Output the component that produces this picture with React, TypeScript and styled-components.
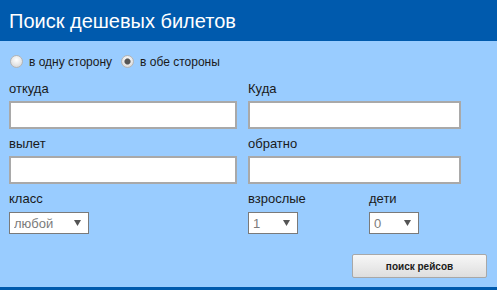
import React, { FC } from 'react';
import styled, { createGlobalStyle } from 'styled-components';

const GlobalStyle = createGlobalStyle`
  html, body {
    margin: 0;
    padding: 0;
    background: #ffffff;
  }
  body {
    font-family: 'Liberation Sans', Arial, sans-serif;
  }
`;

const COLORS = {
  HEADER: '#005aad',
  BODY: '#99ccff',
  TEXT: '#1a1a1a',
  INPUT_BORDER: '#a9a9a9',
  SELECT_BORDER: '#7a7a7a',
  SELECT_TEXT: '#7b7b7b'
};

const Panel = styled.div`
  width: 497px;
  height: 290px;
  box-sizing: border-box;
  background: ${COLORS.BODY};
  border-bottom: 3px solid ${COLORS.HEADER};
  display: flex;
  flex-direction: column;
`;

const Header = styled.h1`
  margin: 0;
  height: 41px;
  padding: 0 9px;
  background: ${COLORS.HEADER};
  color: #ffffff;
  font-size: 20px;
  font-weight: 400;
  line-height: 43px;
`;

const Form = styled.form`
  padding: 14px 10px 9px 9px;
  display: flex;
  flex-direction: column;
`;

const RadioRow = styled.div`
  display: flex;
  align-items: center;
  height: 13px;
  margin-left: 1px;
  margin-bottom: 13px;
`;

const RadioLabel = styled.label`
  display: flex;
  align-items: center;
  gap: 6px;
  margin-right: 9px;
  font-size: 12px;
  color: ${COLORS.TEXT};
`;

const Radio = styled.input.attrs({ type: 'radio' })`
  appearance: none;
  margin: 0;
  width: 13px;
  height: 13px;
  border-radius: 50%;
  border: 1px solid #b4b4b4;
  box-sizing: border-box;
  background: radial-gradient(circle at 50% 35%, #ffffff 0%, #e6e6e6 55%, #cfcfcf 100%);

  &:checked {
    background: radial-gradient(circle, #555555 0 2.5px, #9a9a9a 3px, transparent 3.6px),
      radial-gradient(circle at 50% 35%, #ffffff 0%, #e6e6e6 55%, #cfcfcf 100%);
  }
`;

const Grid = styled.div`
  display: grid;
  grid-template-columns: 228px 213px;
  column-gap: 11px;
  row-gap: 7px;
`;

const Field = styled.div`
  display: flex;
  flex-direction: column;
`;

const Label = styled.label`
  font-size: 13px;
  line-height: 16px;
  color: ${COLORS.TEXT};
  margin-bottom: 4px;
`;

const TextInput = styled.input.attrs({ type: 'text' })`
  box-sizing: border-box;
  width: 100%;
  height: 28px;
  margin: 0;
  border: 2px solid ${COLORS.INPUT_BORDER};
  background: #ffffff;
  outline: none;
`;

const CountRow = styled.div`
  display: flex;
`;

const CountField = styled(Field)`
  flex: 0 0 121px;
`;

const SelectWrap = styled.div<{ $width: number }>`
  position: relative;
  width: ${p => p.$width}px;
  height: 22px;
  margin-top: 1px;
`;

const Select = styled.select`
  appearance: none;
  box-sizing: border-box;
  width: 100%;
  height: 100%;
  margin: 0;
  padding: 0 0 0 4px;
  border: 1px solid ${COLORS.SELECT_BORDER};
  border-radius: 0;
  background: #ffffff;
  color: ${COLORS.SELECT_TEXT};
  font-family: 'Liberation Sans', Arial, sans-serif;
  font-size: 13px;
  outline: none;
`;

const Arrow = styled.svg`
  position: absolute;
  right: 8px;
  top: 8px;
  pointer-events: none;
`;

const Footer = styled.div`
  display: flex;
  justify-content: flex-end;
  margin-top: 20px;
`;

const SearchButton = styled.button`
  width: 135px;
  height: 24px;
  margin: 0;
  border: 1px solid #a8a8a8;
  border-radius: 2px;
  background: linear-gradient(#f7f7f7, #dedede);
  color: #1a1a1a;
  font-family: 'Liberation Sans', Arial, sans-serif;
  font-size: 10px;
  font-weight: 700;
`;

const DropSelect: FC<{ width: number; value: string; options: string[] }> = ({
  width,
  value,
  options
}) => (
  <SelectWrap $width={width}>
    <Select defaultValue={value}>
      {options.map(o => (
        <option key={o}>{o}</option>
      ))}
    </Select>
    <Arrow width="7" height="6" viewBox="0 0 7 6">
      <path d="M0 0 H7 L3.5 6 Z" fill="#555555" />
    </Arrow>
  </SelectWrap>
);

const App: FC = () => (
  <>
    <GlobalStyle />
    <Panel>
      <Header>Поиск дешевых билетов</Header>
      <Form>
        <RadioRow>
          <RadioLabel>
            <Radio name="way" />в одну сторону
          </RadioLabel>
          <RadioLabel>
            <Radio name="way" defaultChecked />в обе стороны
          </RadioLabel>
        </RadioRow>
        <Grid>
          <Field>
            <Label>откуда</Label>
            <TextInput />
          </Field>
          <Field>
            <Label>Куда</Label>
            <TextInput />
          </Field>
          <Field>
            <Label>вылет</Label>
            <TextInput />
          </Field>
          <Field>
            <Label>обратно</Label>
            <TextInput />
          </Field>
          <Field>
            <Label>класс</Label>
            <DropSelect width={80} value="любой" options={['любой', 'эконом', 'бизнес']} />
          </Field>
          <CountRow>
            <CountField>
              <Label>взрослые</Label>
              <DropSelect width={50} value="1" options={['1', '2', '3', '4']} />
            </CountField>
            <CountField>
              <Label>дети</Label>
              <DropSelect width={50} value="0" options={['0', '1', '2', '3']} />
            </CountField>
          </CountRow>
        </Grid>
        <Footer>
          <SearchButton type="button">поиск рейсов</SearchButton>
        </Footer>
      </Form>
    </Panel>
  </>
);

export default App;
